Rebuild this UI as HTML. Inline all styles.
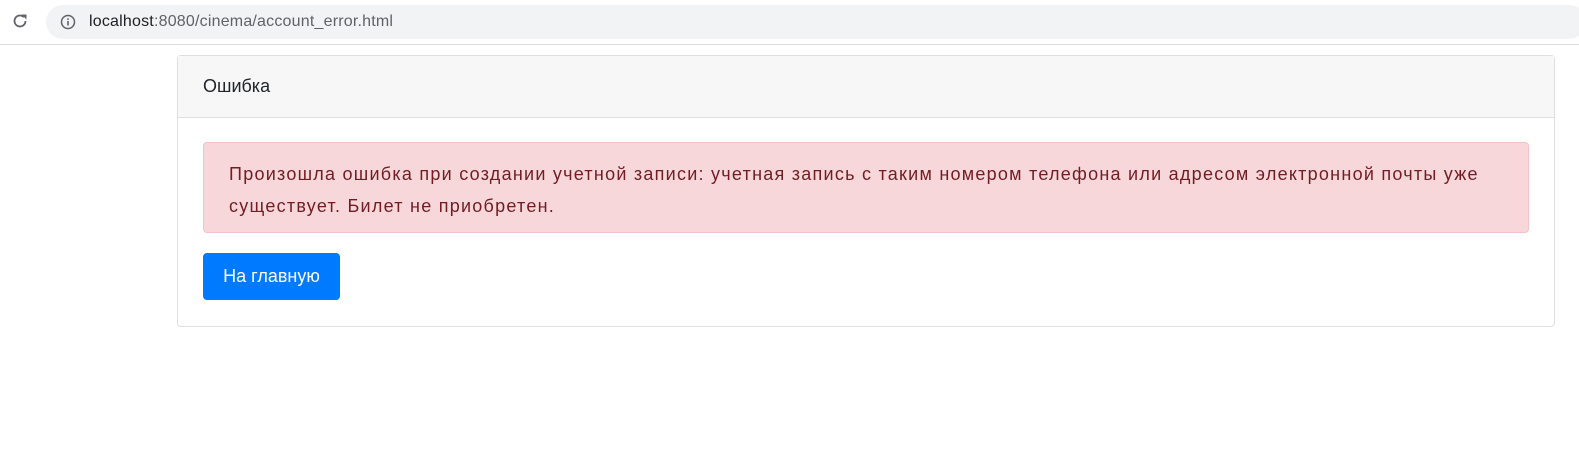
<!DOCTYPE html>
<html><head><meta charset="utf-8"><style>
html,body{margin:0;padding:0;overflow:hidden}
body{width:1579px;height:458px;background:#fff;font-family:"Liberation Sans","DejaVu Sans",sans-serif;position:relative}
.bar{position:absolute;left:0;top:0;width:1579px;height:44px;background:#fff;border-bottom:1px solid #dadce0}
.url{position:absolute;left:46px;top:5px;width:1540px;height:34px;border-radius:17px;background:#f1f3f4}
.url span{position:absolute;left:43px;top:8px;font-size:16px;color:#5f6368;letter-spacing:0.2px}
.url b{font-weight:normal;color:#202124}
.card{position:absolute;left:177px;top:55px;width:1376px;height:270px;border:1px solid #dfdfdf;border-radius:4px}
.hd{height:61px;background:#f7f7f7;border-bottom:1px solid #dfdfdf;font-size:18px;color:#212529;line-height:61px;padding-left:25px}
.alert{position:absolute;left:25px;top:86px;width:1324px;height:89px;background:#f8d7da;border:1px solid #f5c2c7;border-radius:4px;color:#721c24;font-size:18px;line-height:32px;white-space:nowrap;letter-spacing:1.25px}
.alert div{padding:15px 25px}
.btn{position:absolute;left:25px;top:197px;width:137px;height:47px;background:#007bff;border-radius:4px;color:#fff;font-size:18px;line-height:47px;text-align:center}
</style></head><body>
<div class="bar">
<svg style="position:absolute;left:10px;top:11px" width="20" height="20" viewBox="0 0 20 20"><path d="M15.5 10a5.5 5.5 0 1 1-1.6-3.9" fill="none" stroke="#5f6368" stroke-width="1.8"/><path d="M11.5 3.5h5v5z" fill="#5f6368"/></svg>
<div class="url">
<svg style="position:absolute;left:14px;top:9px" width="16" height="16" viewBox="0 0 16 16"><circle cx="8" cy="8" r="6.5" fill="none" stroke="#5f6368" stroke-width="1.5"/><rect x="7.2" y="7" width="1.6" height="4.5" fill="#5f6368"/><rect x="7.2" y="4.3" width="1.6" height="1.6" fill="#5f6368"/></svg>
<span><b>localhost</b>:8080/cinema/account_error.html</span></div>
</div>
<div class="card">
<div class="hd">Ошибка</div>
<div class="alert"><div>Произошла ошибка при создании учетной записи: учетная запись с таким номером телефона или адресом электронной почты уже<br>существует. Билет не приобретен.</div></div>
<div class="btn">На главную</div>
</div>
</body></html>
